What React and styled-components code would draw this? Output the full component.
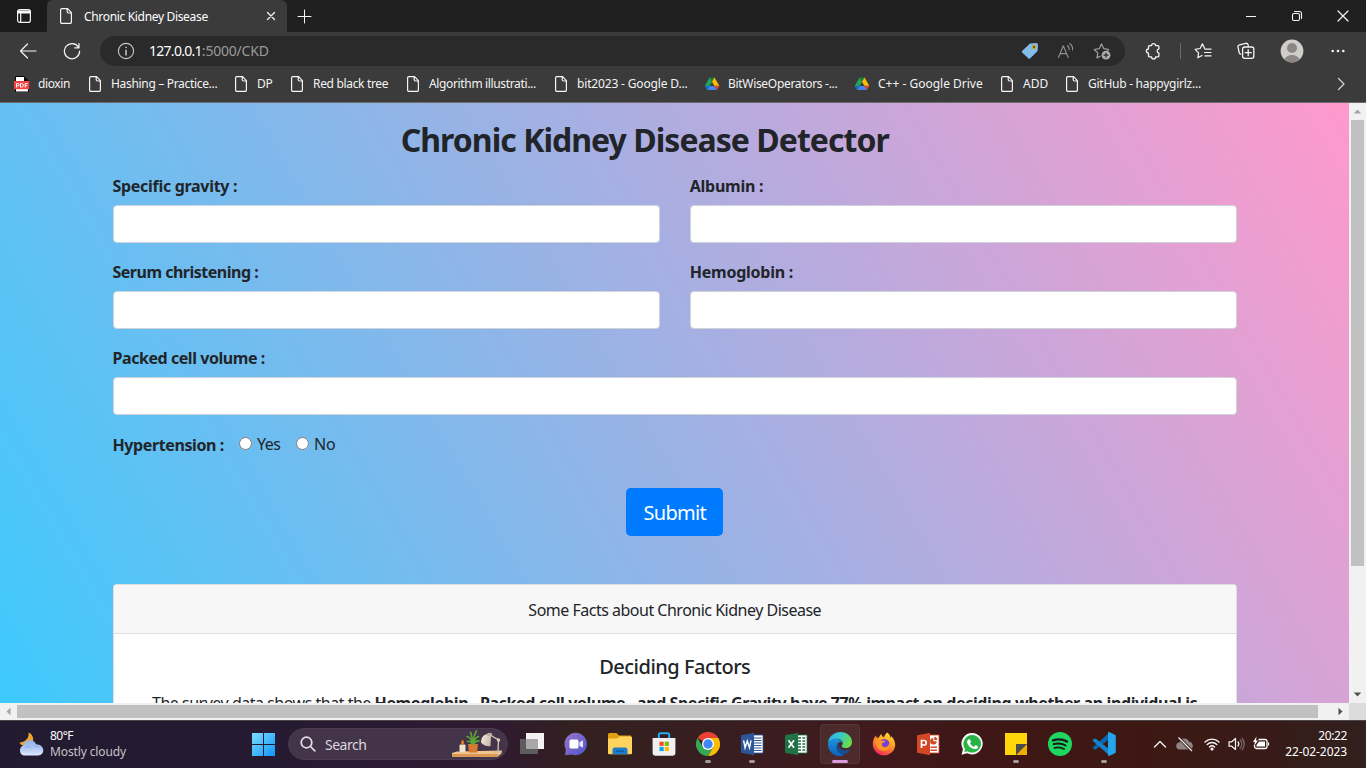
import React from "react";
import styled, { createGlobalStyle } from "styled-components";

const GlobalStyle = createGlobalStyle`
  * { box-sizing: border-box; }
  html, body { margin: 0; padding: 0; overflow: hidden; }
  body { font-family: "Segoe UI", "Noto Sans", "Open Sans", sans-serif; color: #212529; }
  svg { display: block; flex: none; }
`;

/* ---------- shared ---------- */
const Screen = styled.div`
  width: 1366px;
  height: 768px;
  display: flex;
  flex-direction: column;
  overflow: hidden;
`;
const Text = styled.span`
  letter-spacing: ${(p) => p.$track || 0}px;
  white-space: pre;
`;

/* ---------- browser chrome ---------- */
const TitleBar = styled.header`
  height: 32px;
  flex: none;
  display: flex;
  background: #202020;
  color: #fff;
`;
const TabActions = styled.div`
  width: 47px;
  display: flex;
  align-items: center;
  justify-content: center;
  background: #1b1b1b;
  border-bottom-right-radius: 4px;
`;
const Tab = styled.div`
  width: 240px;
  padding: 0 9px 0 11px;
  display: flex;
  align-items: center;
  background: #3b3b3b;
  border-radius: 6px 6px 0 0;
  font-size: 12px;
`;
const TabTitle = styled(Text)`
  flex: 1;
  margin-left: 10px;
  color: #fff;
`;
const NewTab = styled.div`
  width: 35px;
  display: flex;
  align-items: center;
  justify-content: center;
`;
const WindowControls = styled.div`
  margin-left: auto;
  display: flex;
`;
const WindowButton = styled.div`
  width: 46px;
  display: flex;
  align-items: center;
  justify-content: center;
`;
const Toolbar = styled.div`
  height: 38px;
  flex: none;
  display: flex;
  align-items: center;
  background: #3b3b3b;
`;
const ToolButton = styled.div`
  width: ${(p) => p.$w || 44}px;
  height: 30px;
  display: flex;
  align-items: center;
  justify-content: center;
`;
const AddressBar = styled.div`
  width: 1025px;
  height: 30px;
  padding: 0 5px 0 17px;
  display: flex;
  align-items: center;
  border-radius: 15px;
  background: #2a2a2a;
  font-size: 14px;
`;
const Url = styled.div`
  flex: 1;
  margin-left: 14px;
  display: flex;
  color: #9a9a9a;
  line-height: 18px;
`;
const Host = styled(Text)`
  color: #fff;
`;
const AddressAction = styled(ToolButton)`
  width: 36px;
`;
const Divider = styled.i`
  width: 1px;
  height: 16px;
  background: #6a6a6a;
`;
const Bookmarks = styled.nav`
  height: 33px;
  flex: none;
  display: flex;
  align-items: center;
  padding: 0 0 5px 14px;
  background: #3b3b3b;
  border-bottom: 1px solid #6c6c6c;
  font-size: 12px;
  color: #f3f3f3;
`;
const Bookmark = styled.div`
  width: ${(p) => p.$w}px;
  display: flex;
  align-items: center;
  gap: 8px;
`;
const Overflow = styled.div`
  margin-left: auto;
  width: 51px;
  display: flex;
  justify-content: center;
`;

/* ---------- page ---------- */
const Viewport = styled.div`
  height: 617px;
  flex: none;
  display: grid;
  grid-template-columns: 1349px 17px;
  grid-template-rows: 600px 17px;
`;
const PageClip = styled.div`
  overflow: hidden;
  background: linear-gradient(60deg, #33ccff, #ff99cc) 0 0 / 1349px 760px no-repeat;
`;
const Page = styled.main`
  height: 760px;
  padding: 17px 112px 0 112.5px;
  font-size: 16px;
  line-height: 24px;
`;
const Title = styled.h1`
  margin: 0;
  height: 53px;
  padding: 1px 60px 0 0;
  text-align: center;
  font-size: 32px;
  line-height: 38px;
  font-weight: 700;
  letter-spacing: -0.97px;
`;
const FieldRow = styled.div`
  display: grid;
  grid-template-columns: ${(p) => (p.$single ? "1fr" : "1fr 1fr")};
  column-gap: 30px;
  margin-bottom: 16px;
`;
const Field = styled.label`
  display: flex;
  flex-direction: column;
  gap: 7px;
  padding-top: 1px;
  font-weight: 700;
`;
const Input = styled.input`
  width: 100%;
  height: 38px;
  border: 1px solid #ced4da;
  border-radius: 4px;
  background: #fff;
`;
const RadioRow = styled.div`
  display: flex;
  align-items: center;
  height: 24px;
`;
const RadioLabel = styled(Text)`
  width: 126px;
  font-weight: 700;
  padding-top: 3px;
`;
const Radio = styled.input`
  width: 13px;
  height: 13px;
  margin: 0 5.5px 0 0;
`;
const RadioOption = styled.label`
  display: flex;
  align-items: center;
  width: 57px;
`;
const RadioText = styled(Text)`
  padding-top: 1px;
`;
const SubmitRow = styled.div`
  display: flex;
  justify-content: center;
  padding: 33px 0 48px;
`;
const Submit = styled.button`
  width: 97px;
  height: 48px;
  padding: 2px 0 0;
  border: 0;
  border-radius: 4.8px;
  background: #007bff;
  color: #fff;
  font: 400 20px/30px "Segoe UI", "Noto Sans", sans-serif;
  letter-spacing: -0.7px;
`;
const Card = styled.section`
  background: #fff;
  border: 1px solid rgba(0, 0, 0, 0.125);
  border-radius: 4px;
  height: 300px;
`;
const CardHeader = styled.div`
  height: 49px;
  padding-top: 13px;
  text-align: center;
  background: #f7f7f7;
  border-bottom: 1px solid #dfdfdf;
  border-radius: 3px 3px 0 0;
`;
const CardBody = styled.div`
  padding: 21px 38.5px;
`;
const CardTitle = styled.h5`
  margin: 0 0 12px;
  text-align: center;
  font-size: 20px;
  line-height: 24px;
  font-weight: 500;
  letter-spacing: -0.5px;
`;
const Facts = styled.p`
  margin: 0;
  white-space: nowrap;
`;
const Strong = styled(Text)`
  font-weight: 700;
`;

/* ---------- scrollbars ---------- */
const VTrack = styled.div`
  background: #f1f1f1;
  display: flex;
  flex-direction: column;
  align-items: center;
`;
const HTrack = styled.div`
  background: #f1f1f1;
  display: flex;
  align-items: center;
`;
const ScrollArrow = styled.div`
  width: 17px;
  height: 17px;
  display: flex;
  align-items: center;
  justify-content: center;
`;
const VThumb = styled.div`
  width: 13px;
  height: 446px;
  margin-bottom: auto;
  background: #c1c1c1;
`;
const HThumb = styled.div`
  height: 13px;
  width: 1301px;
  margin-right: auto;
  background: #c1c1c1;
`;
const ScrollCorner = styled.div`
  background: #dcdcdc;
`;

/* ---------- taskbar ---------- */
const Taskbar = styled.footer`
  height: 48px;
  flex: none;
  display: flex;
  align-items: center;
  padding-bottom: 1px;
  border-top: 1px solid #4c4549;
  background: linear-gradient(90deg, #221b30 0%, #251a31 20%, #2e1a31 36%, #33201f 42%, #371e20 52%, #401a1d 62%, #3e1716 72%, #3d1813 84%, #381b18 92%, #30201e 100%);
  color: #fff;
`;
const Weather = styled.div`
  width: 241px;
  padding-left: 18px;
  display: flex;
  align-items: center;
  gap: 6px;
`;
const WeatherText = styled.div`
  display: flex;
  flex-direction: column;
  font-size: 12px;
  line-height: 16px;
`;
const Muted = styled(Text)`
  color: #c6c2c9;
`;
const TaskSlot = styled.div`
  width: 44px;
  height: 46px;
  padding-top: 3px;
  display: flex;
  flex-direction: column;
  align-items: center;
`;
const IconTile = styled.div`
  width: 40px;
  height: 40px;
  flex: none;
  display: flex;
  align-items: center;
  justify-content: center;
  border-radius: 4px;
  background: ${(p) => (p.$active ? "rgba(255,255,255,0.07)" : "transparent")};
  box-shadow: ${(p) => (p.$active ? "inset 0 0 0 1px rgba(255,255,255,0.05)" : "none")};
`;
const Indicator = styled.i`
  width: ${(p) => (p.$state === "active" ? 16 : 6)}px;
  height: 3px;
  flex: none;
  margin-top: -4px;
  border-radius: 2px;
  background: ${(p) => (p.$state === "active" ? "#d99be0" : p.$state ? "#a39a9a" : "transparent")};
`;
const SearchPill = styled.div`
  width: 220px;
  height: 32px;
  margin: 0 2px 0 3px;
  padding: 0 3px 0 11px;
  display: flex;
  align-items: center;
  border-radius: 16px;
  background: #43344a;
  border: 1px solid #4a3b50;
  font-size: 14px;
  color: #dcd6de;
`;
const SearchLabel = styled(Text)`
  flex: 1;
  margin-left: 9px;
`;
const Tray = styled.div`
  margin-left: auto;
  display: flex;
  align-items: center;
`;
const TrayCell = styled.div`
  width: ${(p) => p.$w}px;
  display: flex;
  justify-content: center;
`;
const Clock = styled.div`
  width: 72px;
  margin-right: 19px;
  display: flex;
  flex-direction: column;
  align-items: flex-end;
  font-size: 12px;
  line-height: 16px;
`;

/* ---------- icons ---------- */
const Line = ({ s = 16, w = 1.2, c = "#f5f5f5", children }) => (
  <svg width={s} height={s} viewBox={`0 0 ${s} ${s}`} fill="none" stroke={c} strokeWidth={w} strokeLinecap="round" strokeLinejoin="round">
    {children}
  </svg>
);
const PageIcon = () => (
  <Line s={16}>
    <path d="M3.6.6h6L13.4 4.6V14a1.3 1.3 0 0 1-1.3 1.4H3.9A1.3 1.3 0 0 1 2.6 14V1.9A1.3 1.3 0 0 1 3.9.6M9.2.8v3a1.2 1.2 0 0 0 1.2 1.2h2.9" />
  </Line>
);
const PdfIcon = () => (
  <svg width="16" height="16" viewBox="0 0 16 16">
    <path d="M1.5.5h8.700l4.300 4V16h-13z" fill="#fff" stroke="#050505" />
    <path d="M10 .5 14.500 5H10z" fill="#050505" />
    <rect x="0" y="5" width="15.200" height="8.200" fill="#f5423f" />
    <g fill="none" stroke="#fff" strokeWidth="1">
      <path d="M2.500 11.500V7.500h1.300a1.100 1.100 0 0 1 0 2.400H2.500" />
      <path d="M6.500 7.500h1a1.700 1.700 0 0 1 0 3.700h-1z" />
      <path d="M11.200 11.500v-4h2.300M11.200 9.500h2" />
    </g>
  </svg>
);
const DriveIcon = () => (
  <svg width="16" height="16" viewBox="0 0 16 16">
    <path d="M5.500 1.500 8 5.800 3.300 14 .8 9.900z" fill="#22a45a" />
    <path d="M5.500 1.500h5L8 5.800z" fill="#188038" />
    <path d="m10.500 1.500 4.800 8.300h-5L8 5.800z" fill="#fbbc04" />
    <path d="M.8 9.900h5L3.300 14z" fill="#1967d2" />
    <path d="M5.800 9.900h4.600l2.400 4.200H3.300z" fill="#4285f4" />
    <path d="M10.300 9.900h5L12.800 14z" fill="#ea4335" />
  </svg>
);
const TabActionsIcon = () => (
  <Line s={16} w={1.2}>
    <rect x="1.600" y="1.600" width="12.800" height="12.800" rx="2.200" />
    <path d="M2 3h12v2H2zM2 4.800h12" fill="#f5f5f5" />
    <path d="M4.700 5v9" />
  </Line>
);
const ExtensionIcon = () => (
  <Line s={18} w={1.3}>
    <path d="M5.500 3.600h2.100a2 2 0 0 1 4 0h2.300a1 1 0 0 1 1 1v2.200a2.200 2.200 0 0 0 0 4.300v2.800a1 1 0 0 1-1 1h-2.300a2 2 0 0 1-4 0H5.500a1 1 0 0 1-1-1v-2.700a2.100 2.100 0 0 1 0-4.200V4.600a1 1 0 0 1 1-1z" />
  </Line>
);
const TagIcon = () => (
  <svg width="18" height="18" viewBox="0 0 18 18">
    <path d="M9 1.500 15 1a2 2 0 0 1 2 2l-.4 6-7.300 7.300a1.400 1.400 0 0 1-2 0L1.300 10.800a1.400 1.400 0 0 1 0-2z" fill="#83bdea" />
    <circle cx="13" cy="5" r="1.700" fill="#4b4a35" stroke="#d7a116" strokeWidth="1.200" />
  </svg>
);
const ReadAloudIcon = () => (
  <Line s={18} w={1.1} c="#929292">
    <path d="M1.500 15.500 6.300 3.800 11.200 15.500M3.100 11.600h6.500M10.500 3.500a5 5 0 0 1 1.700 4.200M12.800 1.500a7.500 7.500 0 0 1 2.800 6.400" />
  </Line>
);
const StarAddIcon = () => (
  <svg width="18" height="18" viewBox="0 0 18 18">
    <path d="M7.500 14 4 15.900l.8-5L1.200 7.500l5-.8L8.500 2l2.300 4.700 5 .8-1.400 1.400" fill="none" stroke="#a0a0a0" strokeWidth="1.200" strokeLinejoin="round" />
    <circle cx="13" cy="13.200" r="4.400" fill="#b0b0b0" />
    <path d="M13 10.700v5M10.500 13.200h5" stroke="#2a2a2a" strokeWidth="1.200" />
  </svg>
);
const FavoritesIcon = () => (
  <Line s={18}>
    <path d="M10.500 6.200 8.400 1.800 6.100 6.500l-5 .8 3.500 3.500-.8 5 4.200-2.300M11 7.200h6M10.500 10.500H17M11 13.900h6" />
  </Line>
);
const CollectionsIcon = () => (
  <Line s={18} w={1.3}>
    <path d="M3.700 12.200A2 2 0 0 1 2.300 11L1 5.200A2 2 0 0 1 2.500 2.800L8.700 1.300A2 2 0 0 1 11 2.600l.4 1.300" />
    <rect x="5.600" y="5" width="11.200" height="11.300" rx="2" />
    <path d="M11.200 7.700v6M8.200 10.700h6" />
  </Line>
);
const Avatar = () => (
  <svg width="24" height="24" viewBox="0 0 24 24">
    <circle cx="12" cy="12" r="11.400" fill="#d0ceca" />
    <circle cx="12" cy="9" r="5" fill="#8c8783" />
    <path d="M4.500 20.500a8 7 0 0 1 15 0 11.400 11.400 0 0 1-15 0z" fill="#8c8783" />
  </svg>
);
const WeatherIcon = () => (
  <svg width="26" height="26" viewBox="0 0 26 26">
    <defs>
      <linearGradient id="cloud" x1="0" y1="0" x2="0" y2="1">
        <stop offset="0" stopColor="#8fb3ea" /><stop offset=".65" stopColor="#b9cff5" /><stop offset="1" stopColor="#dfe9ff" />
      </linearGradient>
    </defs>
    <path d="M10.500 1.500c.8 4-1.500 9-9 10.200 2 4 9 5 12.500.800C16.500 9 15 3 10.500 1.500z" fill="#f2a230" />
    <path d="M6 24.500a5.200 5.200 0 0 1-.5-10 6.700 6.700 0 0 1 12.600-1.300c5 .2 7.400 3.400 7.200 6.500a5 5 0 0 1-5 4.800z" fill="url(#cloud)" />
    <path d="M7 16c2-1 4.500-.5 6 1M16 15.500c2-.8 4 0 5 1.300" stroke="#7397dc" strokeWidth="1" fill="none" opacity=".6" />
  </svg>
);
const StartIcon = () => (
  <svg width="24" height="24" viewBox="0 0 24 24">
    <defs>
      <linearGradient id="win" x1="0" y1="0" x2="1" y2="1">
        <stop offset="0" stopColor="#7ddcff" /><stop offset="1" stopColor="#0f95fb" />
      </linearGradient>
    </defs>
    <path d="M1 1h11v11H1zM13 1h11v11H13zM1 13h11v11H1zM13 13h11v11H13z" fill="url(#win)" />
  </svg>
);
const LampArt = () => (
  <svg width="52" height="30" viewBox="0 0 52 30">
    <defs>
      <linearGradient id="shade" x1="0" y1="0" x2="1" y2=".5"><stop offset="0" stopColor="#f7efe0" /><stop offset="1" stopColor="#c9bca8" /></linearGradient>
    </defs>
    <path d="M5 22.500 50 21.500 49.500 24.500 45 28H0v-4z" fill="#f0c48b" />
    <path d="M0 25h46.500L45 28H0z" fill="#d99855" />
    <rect x="7.500" y="15.500" width="6" height="7.500" rx="1" fill="#efe2cf" />
    <path d="M10.500 10.500c1.800 2 1.800 4.800 0 5.300-1.800-.5-1.500-3.300 0-5.300z" fill="#f58220" />
    <path d="M16 15h10l-1 8.500h-8z" fill="#d8792f" />
    <g stroke="#5aa832" strokeWidth="1.600" fill="none" strokeLinecap="round">
      <path d="M20.500 15C19 9 17.500 8 15 7.500M20.500 15C20 8 19.500 5 18.500 3.500M21 15C21.500 8 22.500 5 24.500 2M21 15c1.500-5 3-7 5.500-7.500M21.500 15c2-3 3.500-3.500 5.500-3M20 15c-1.500-3-3-3-4.500-2.500" />
    </g>
    <path d="M29 13.500C29 8.500 31.500 5.500 36 5l3 2-.5 10c-2.500 1-7.500-.5-9.500-3.500z" fill="url(#shade)" />
    <ellipse cx="37.500" cy="5.500" rx="2.800" ry="1.800" fill="#bdb0a0" />
    <path d="m38 6 8.500 5-.5 11.500M41.500 23h7" stroke="#cdbfae" strokeWidth="1.400" fill="none" />
    <circle cx="46.500" cy="11" r="1.700" fill="#d8cbbb" />
  </svg>
);
const TaskViewIcon = () => (
  <svg width="26" height="24" viewBox="0 0 26 24">
    <rect x="7" y="1" width="18" height="16" fill="#f5f2f2" />
    <rect x="1" y="7" width="18" height="15" fill="#5f5c5d" />
    <rect x="7" y="7" width="12" height="10" fill="#aaa7a8" />
  </svg>
);
const ChatIcon = () => (
  <svg width="24" height="24" viewBox="0 0 24 24">
    <defs><linearGradient id="chat" x1="0" y1="0" x2="1" y2="1"><stop offset="0" stopColor="#9b76c8" /><stop offset="1" stopColor="#4d55cd" /></linearGradient></defs>
    <path d="M12 .800a11.200 11.200 0 1 1-4.500 21.600L1 23.300l.8-6A11.200 11.200 0 0 1 12 .800z" fill="url(#chat)" />
    <rect x="5.500" y="7.500" width="9" height="9" rx="1.500" fill="#fff" />
    <path d="m15.300 10.500 3.700-2.300v7.600l-3.700-2.300z" fill="#e9e4ff" />
  </svg>
);
const FolderIcon = () => (
  <svg width="24" height="24" viewBox="0 0 24 24">
    <path d="M0 2.500A1.500 1.500 0 0 1 1.500 1h7l2.500 2.500h12V10H0z" fill="#e0a010" />
    <path d="M0 6.500h9.500l2-2H23a1 1 0 0 1 1 1v15.700a1 1 0 0 1-1 1H1a1 1 0 0 1-1-1z" fill="#ffd45e" />
    <path d="M4.500 22.200V18A2.500 2.500 0 0 1 7 15.500h10a2.500 2.500 0 0 1 2.500 2.500v4.200z" fill="#1c7cc9" />
    <rect x="8" y="18.500" width="8" height="1.300" fill="#0e5a9c" />
  </svg>
);
const StoreIcon = () => (
  <svg width="24" height="24" viewBox="0 0 24 24">
    <path d="M6.800 6V3A1.600 1.600 0 0 1 8.400 1.300h7.200A1.600 1.600 0 0 1 17.200 3v3" fill="none" stroke="#21b2ef" strokeWidth="2" />
    <path d="M.6 6h22.800v14.800a3 3 0 0 1-3 3H3.600a3 3 0 0 1-3-3z" fill="#f1f0f0" />
    <rect x="7.500" y="9.700" width="4.200" height="4.200" fill="#f25022" /><rect x="12.700" y="9.700" width="4.200" height="4.200" fill="#7fba00" />
    <rect x="7.500" y="14.900" width="4.200" height="4.200" fill="#00a4ef" /><rect x="12.700" y="14.900" width="4.200" height="4.200" fill="#ffb900" />
  </svg>
);
const ChromeIcon = () => (
  <svg width="24" height="24" viewBox="0 0 24 24">
    <path d="M12 12 1.600 6A12 12 0 0 1 22.400 6z" fill="#ea4335" />
    <path d="M12 6h10.400A12 12 0 0 1 12 24l5.200-9z" fill="#fbbc04" />
    <path d="M6.800 15 1.600 6A12 12 0 0 0 12 24l5.200-9z" fill="#34a853" />
    <circle cx="12" cy="12" r="6" fill="#fff" /><circle cx="12" cy="12" r="4.700" fill="#4285f4" />
  </svg>
);
const OfficeIcon = ({ color, children, sheet }) => (
  <svg width="24" height="24" viewBox="0 0 24 24">
    <rect x="11" y="3" width="12" height="18" fill="#fff" stroke={color} strokeWidth=".8" />
    {sheet}
    <path d="M1 3.300 14 .8v22.400L1 20.700z" fill={color} />
    <g fill="none" stroke="#fff" strokeWidth="1.700">{children}</g>
  </svg>
);
const WordIcon = () => (
  <OfficeIcon color="#2b579a" sheet={<path d="M13 6h8.500M13 8.500h8.500M13 11h8.500M13 13.500h8.500M13 16h8.500M13 18.500h8.500" stroke="#2b579a" strokeWidth="1.100" />}>
    <path d="m3.600 8.300 1.500 7.400L7.300 9l2.200 6.700L11 8.300" strokeWidth="1.400" />
  </OfficeIcon>
);
const ExcelIcon = () => (
  <OfficeIcon color="#217346" sheet={<path d="M14 6h3M18.300 6h3M14 9h3M18.300 9h3M14 12h3M18.300 12h3M14 15h3M18.300 15h3M14 18h3M18.300 18h3" stroke="#217346" strokeWidth="1.500" />}>
    <path d="m4.500 8.300 5.500 7.400M10 8.300l-5.500 7.400" />
  </OfficeIcon>
);
const PowerPointIcon = () => (
  <OfficeIcon color="#d24726" sheet={<g fill="#d24726"><path d="M17.300 6a3.300 3.300 0 1 0 3.400 3.300h-3.400zM18.300 4.700v3.400h3a3 3 0 0 0-3-3.400z" /><path d="M14.500 14.500h6.500V16h-6.500zM14.500 17.500h6.500V19h-6.500z" /></g>}>
    <path d="M5.500 16V8.500H8a2.200 2.200 0 0 1 0 4.500H5.500" />
  </OfficeIcon>
);
const EdgeIcon = () => (
  <svg width="24" height="24" viewBox="0 0 24 24">
    <defs>
      <linearGradient id="eg" x1="0" y1="0" x2="1" y2=".4"><stop offset="0" stopColor="#2aa9e6" /><stop offset=".5" stopColor="#33c9cf" /><stop offset="1" stopColor="#66dc4d" /></linearGradient>
      <linearGradient id="eb" x1="0" y1="0" x2="0" y2="1"><stop offset="0" stopColor="#1c93de" /><stop offset="1" stopColor="#0c62bf" /></linearGradient>
    </defs>
    <path d="M0 11.500C.5 4 6.500 0 12.500 0 19 0 24 4.500 24 10c0 4-3 6-6.300 6-2.500 0-4.200-1-4-2 .200-.8 1.300-1.500 1.100-3.200C14.400 8 11.500 6.500 8.500 6.700 4.500 7 1 9 0 11.500z" fill="url(#eg)" />
    <path d="M0 11.500C1 8.500 4.500 6.500 8.500 6.700c3 .2 5.500 1.800 6.200 4-1-1.200-4.200-1.200-5.500 1.300-1.500 3-.5 8.500 6 10.800 1 .3-1 1.200-3.200 1.200C5 24-.3 18.500 0 11.500z" fill="url(#eb)" />
    <path d="M9.200 12c-1.700 3.500 0 9.300 6 10.800 2.800-.6 5.300-2.600 6.700-4.700.4-.6-.1-.8-.6-.6-5.600 2-10.100-.1-10.600-4 0-.8.100-1.500.3-2.200-.7.100-1.400.300-1.800.7z" fill="#154f92" />
  </svg>
);
const FirefoxIcon = () => (
  <svg width="24" height="24" viewBox="0 0 24 24">
    <defs><linearGradient id="ff" x1=".8" y1="0" x2=".3" y2="1"><stop offset="0" stopColor="#ffe141" /><stop offset=".45" stopColor="#ff9a20" /><stop offset="1" stopColor="#f2255c" /></linearGradient></defs>
    <path d="M15.300.500c2 1.700 3 3.500 3.300 5.300 0 0 .700-.6.600-1.900 3.300 3.500 4.300 7 4 10A11.300 11.300 0 0 1 .8 13.500C.6 9.500 1.600 6 4 3.500l.7 2.800c1-.9 2-.8 2.300-.8C7.300 4 8.300 2.700 9.500 2c0 1.500 1 2.800 2.500 3.200C12.500 3 14 1.500 15.300.500z" fill="url(#ff)" />
    <circle cx="12.300" cy="12.300" r="5.200" fill="#7540d8" />
    <path d="M4 9.500c2-2 4.500-1.700 6-.8h3.500c-.3 1.300-2 2-3.300 2.300-.6 1.500-.4 3.300 1.600 4 2.500.8 5-1 5.200-3.700C19 15 16 19 12 19c-5 0-8.500-4-8-9.500z" fill="#ff9622" />
  </svg>
);
const WhatsAppIcon = () => (
  <svg width="24" height="24" viewBox="0 0 24 24">
    <path d="M12.300 1a10.700 10.700 0 1 1-5.200 20.200L1.500 22.700 3 17.200A10.700 10.700 0 0 1 12.300 1z" fill="#f7f7f7" />
    <path d="M12.300 3a8.800 8.800 0 1 1-4.900 16.200L4.300 20l.8-3.100A8.800 8.800 0 0 1 12.300 3z" fill="#28b445" />
    <path d="M9.400 7.300c.4 0 .5.100.7.500l.8 1.900c.1.300 0 .5-.9 1.600 1 1.800 2.300 2.800 4 3.500.4-.3.800-1 1.200-1.400.2-.2.300-.2.600-.1l2 1c.3.200.3.500.1 1.100-.5 1.300-1.800 1.800-3 1.700-4-.4-7.500-4-7.800-6.900-.1-1.200.7-2.600 1.500-2.800z" fill="#fff" />
  </svg>
);
const StickyIcon = () => (
  <svg width="24" height="24" viewBox="0 0 24 24">
    <path d="M1 1h22v11L12 23H1z" fill="#ffd60a" />
    <path d="M23 12v11H12z" fill="#f0ae00" /><path d="M12 12h11L12 23z" fill="#4b4b4d" />
  </svg>
);
const SpotifyIcon = () => (
  <svg width="24" height="24" viewBox="0 0 24 24">
    <circle cx="12" cy="12" r="12" fill="#1ed760" />
    <g fill="none" stroke="#19191a" strokeLinecap="round">
      <path d="M5 8.300c5-1.500 10-1 14 1.300" strokeWidth="2.300" /><path d="M5.600 12.200c4.300-1.200 8.500-.7 12 1.300" strokeWidth="1.900" /><path d="M6.200 15.900c3.600-1 7-.6 10 1.100" strokeWidth="1.600" />
    </g>
  </svg>
);
const CodeIcon = () => (
  <svg width="24" height="24" viewBox="0 0 24 24">
    <path d="M17 7 3.500 17.500 1 16.400a.8.800 0 0 1-.1-1.300L17.500.3z" fill="#0a67a9" transform="translate(0 .2)" />
    <path d="M17 17 3.500 6.500 1 7.600A.8.800 0 0 0 .9 8.900L17.500 23.500z" fill="#1583cc" />
    <path d="M17.500.2 23 2.700a1.300 1.300 0 0 1 .8 1.200v16.200a1.300 1.300 0 0 1-.8 1.200l-5.500 2.500c-.8.300-1.500-.1-1.500-1V1.200c0-.9.700-1.300 1.500-1z" fill="#25a5ee" />
  </svg>
);
const ScrollTri = ({ dir, color }) => (
  <svg width="9" height="9" viewBox="0 0 9 9">
    <path d="M.8 6.500 4.500 2.500 8.200 6.500z" fill={color} transform={`rotate(${dir} 4.500 4.500)`} />
  </svg>
);

/* ---------- data ---------- */
const bookmarks = [
  { label: "dioxin", w: 73, track: -0.39, icon: PdfIcon },
  { label: "Hashing – Practice...", w: 146, track: -0.32 },
  { label: "DP", w: 56, track: -0.3 },
  { label: "Red black tree", w: 116, track: -0.33 },
  { label: "Algorithm illustrati...", w: 148, track: -0.35 },
  { label: "bit2023 - Google D...", w: 151, track: -0.16 },
  { label: "BitWiseOperators -...", w: 150, track: -0.31, icon: DriveIcon },
  { label: "C++ - Google Drive", w: 145, track: 0, icon: DriveIcon },
  { label: "ADD", w: 65, track: 0 },
  { label: "GitHub - happygirlz...", w: 140, track: -0.26 },
];
const apps = [
  { id: "taskview", icon: TaskViewIcon }, { id: "chat", icon: ChatIcon }, { id: "files", icon: FolderIcon },
  { id: "store", icon: StoreIcon }, { id: "chrome", icon: ChromeIcon, state: "open" }, { id: "word", icon: WordIcon, state: "open" },
  { id: "excel", icon: ExcelIcon }, { id: "edge", icon: EdgeIcon, state: "active" }, { id: "firefox", icon: FirefoxIcon },
  { id: "powerpoint", icon: PowerPointIcon }, { id: "whatsapp", icon: WhatsAppIcon }, { id: "notes", icon: StickyIcon, state: "open" },
  { id: "spotify", icon: SpotifyIcon }, { id: "code", icon: CodeIcon, state: "open" },
];
const rows = [
  [["Specific gravity :", -0.3], ["Albumin :", -0.25]],
  [["Serum christening :", -0.5], ["Hemoglobin :", -0.25]],
  [["Packed cell volume :", -0.44]],
];

const TaskApp = ({ icon: Icon, state }) => (
  <TaskSlot>
    <IconTile $active={state === "active"}><Icon /></IconTile>
    <Indicator $state={state} />
  </TaskSlot>
);

function BrowserChrome() {
  return (
    <>
      <TitleBar>
        <TabActions><TabActionsIcon /></TabActions>
        <Tab>
          <PageIcon />
          <TabTitle $track={-0.33}>Chronic Kidney Disease</TabTitle>
          <Line s={14} w={1.3}><path d="m3.500 3.500 7 7M10.500 3.500l-7 7" /></Line>
        </Tab>
        <NewTab><Line s={15} w={1}><path d="M7.500 1v13M1 7.500h13" /></Line></NewTab>
        <WindowControls>
          <WindowButton><Line s={12} w={1}><path d="M1 6.500h10" strokeLinecap="butt" /></Line></WindowButton>
          <WindowButton><Line s={12} w={1.100}><rect x="1.500" y="3.500" width="7" height="7" rx="1.500" /><path d="M3.500 1.500h5a2 2 0 0 1 2 2v5" /></Line></WindowButton>
          <WindowButton><Line s={12} w={1.200}><path d="m1 1 10 10M11 1 1 11" /></Line></WindowButton>
        </WindowControls>
      </TitleBar>
      <Toolbar>
        <ToolButton $w={56}><Line s={18}><path d="M17 9H1.500M8.500 2 1.500 9l7 7" /></Line></ToolButton>
        <ToolButton $w={32}><Line s={18}><path d="M15.500 5.200A7.600 7.600 0 1 0 16.600 9M16 1.500v4.300h-4.300" /></Line></ToolButton>
        <ToolButton $w={12} />
        <AddressBar>
          <Line s={18} w={1.100} c="#c8c8c8"><circle cx="9" cy="9" r="7.600" /><path d="M9 8.200V13M9 5.300v.3" strokeWidth="1.500" /></Line>
          <Url>
            <Host $track={-0.72}>127.0.0.1</Host>
            <Text $track={-0.2}>:5000/CKD</Text>
          </Url>
          <AddressAction><TagIcon /></AddressAction>
          <AddressAction><ReadAloudIcon /></AddressAction>
          <AddressAction><StarAddIcon /></AddressAction>
        </AddressBar>
        <ToolButton $w={55}><ExtensionIcon /></ToolButton>
        <Divider />
        <ToolButton $w={43}><FavoritesIcon /></ToolButton>
        <ToolButton $w={44}><CollectionsIcon /></ToolButton>
        <ToolButton $w={48}><Avatar /></ToolButton>
        <ToolButton $w={44}>
          <svg width="14" height="4" viewBox="0 0 14 4" fill="#f5f5f5"><circle cx="1.700" cy="2" r="1.300" /><circle cx="7" cy="2" r="1.300" /><circle cx="12.300" cy="2" r="1.300" /></svg>
        </ToolButton>
      </Toolbar>
      <Bookmarks>
        {bookmarks.map(({ label, w, track, icon: Icon = PageIcon }) => (
          <Bookmark key={label} $w={w}><Icon /><Text $track={track}>{label}</Text></Bookmark>
        ))}
        <Overflow><Line s={14} w={1.300} c="#d0d0d0"><path d="m4.500 1.500 5.500 5.500-5.500 5.500" /></Line></Overflow>
      </Bookmarks>
    </>
  );
}

function DetectorPage() {
  return (
    <Page>
      <Title>Chronic Kidney Disease Detector</Title>
      {rows.map((fields) => (
        <FieldRow key={fields[0][0]} $single={fields.length === 1}>
          {fields.map(([label, track]) => (
            <Field key={label}><Text $track={track}>{label}</Text><Input type="text" /></Field>
          ))}
        </FieldRow>
      ))}
      <RadioRow>
        <RadioLabel $track={-0.4}>Hypertension :</RadioLabel>
        <RadioOption><Radio type="radio" name="htn" /><RadioText $track={-0.5}>Yes</RadioText></RadioOption>
        <RadioOption><Radio type="radio" name="htn" /><RadioText $track={-0.1}>No</RadioText></RadioOption>
      </RadioRow>
      <SubmitRow><Submit type="button">Submit</Submit></SubmitRow>
      <Card>
        <CardHeader><Text $track={-0.5}>Some Facts about Chronic Kidney Disease</Text></CardHeader>
        <CardBody>
          <CardTitle>Deciding Factors</CardTitle>
          <Facts>
            <Text $track={-0.49}>The survey data shows that the </Text>
            <Strong $track={-0.395}>Hemoglobin , Packed cell volume , and Specific Gravity have 77% impact on deciding whether an individual is</Strong>
          </Facts>
        </CardBody>
      </Card>
    </Page>
  );
}

function SystemTaskbar() {
  return (
    <Taskbar>
      <Weather>
        <WeatherIcon />
        <WeatherText><Text $track={-0.55}>80°F</Text><Muted $track={-0.12}>Mostly cloudy</Muted></WeatherText>
      </Weather>
      <TaskApp icon={StartIcon} />
      <SearchPill>
        <Line s={16} w={1.700} c="#e4dfe6"><circle cx="6.500" cy="6.500" r="5.300" /><path d="m10.500 10.500 4.300 4.300" /></Line>
        <SearchLabel $track={-0.5}>Search</SearchLabel>
        <LampArt />
      </SearchPill>
      {apps.map((a) => <TaskApp key={a.id} icon={a.icon} state={a.state} />)}
      <Tray>
        <TrayCell $w={24}><Line s={14} w={1.300}><path d="m1.500 10 5.500-5.500 5.500 5.500" /></Line></TrayCell>
        <TrayCell $w={26}>
          <svg width="18" height="16" viewBox="0 0 18 16">
            <path d="M4 13.500a3.500 3.500 0 0 1-.5-7 5 5 0 0 1 9.500-.8 4 4 0 0 1 1 7.800z" fill="#8d8483" />
            <path d="M2.500 1.500 16 15" stroke="#391b18" strokeWidth="3" /><path d="M2.500 1.500 16 15" stroke="#eee" strokeWidth="1.200" />
          </svg>
        </TrayCell>
        <TrayCell $w={28}>
          <Line s={18} w={1.400}><path d="M2 7a10 10 0 0 1 14 0M4.200 9.500a6.800 6.800 0 0 1 9.600 0M6.500 12a3.600 3.600 0 0 1 5 0" /><circle cx="9" cy="14" r=".9" fill="#fff" /></Line>
        </TrayCell>
        <TrayCell $w={20}>
          <Line s={18} w={1.200}><path d="M2 6.800h2.800L8.500 3.500v11L4.800 11.200H2z" /><path d="M11 7a3 3 0 0 1 0 4" /><path d="M13.200 5a6 6 0 0 1 0 8M15.200 3.500a8.500 8.500 0 0 1 0 11" stroke="#7d7070" /></Line>
        </TrayCell>
        <TrayCell $w={29}>
          <svg width="18" height="16" viewBox="0 0 18 16" fill="none">
            <path d="M6.500 3.500H13a2 2 0 0 1 2 2v5a2 2 0 0 1-2 2H4.500a2 2 0 0 1-2-2V9" stroke="#fff" strokeWidth="1.300" />
            <path d="M7 5.500h6v5H4.500V9z" fill="#fff" /><path d="M16.500 6.500v3" stroke="#fff" strokeWidth="1.300" />
            <path d="M4.500.5 1 6h2l-1 4 4-5.500H4z" fill="#fff" />
          </svg>
        </TrayCell>
        <Clock><Text $track={-0.4}>20:22</Text><Text $track={-0.08}>22-02-2023</Text></Clock>
      </Tray>
    </Taskbar>
  );
}

export default function App() {
  return (
    <Screen>
      <GlobalStyle />
      <BrowserChrome />
      <Viewport>
        <PageClip><DetectorPage /></PageClip>
        <VTrack>
          <ScrollArrow><ScrollTri dir={0} color="#a3a3a3" /></ScrollArrow>
          <VThumb />
          <ScrollArrow><ScrollTri dir={180} color="#505050" /></ScrollArrow>
        </VTrack>
        <HTrack>
          <ScrollArrow><ScrollTri dir={270} color="#a3a3a3" /></ScrollArrow>
          <HThumb />
          <ScrollArrow><ScrollTri dir={90} color="#505050" /></ScrollArrow>
        </HTrack>
        <ScrollCorner />
      </Viewport>
      <SystemTaskbar />
    </Screen>
  );
}
